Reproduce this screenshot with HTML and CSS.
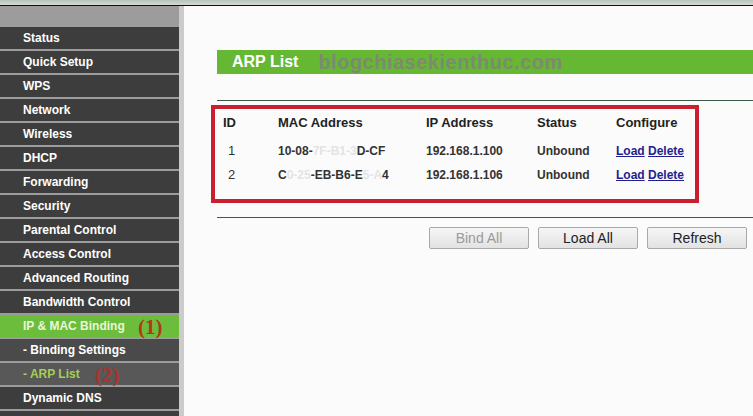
FILE: index.html
```html
<!DOCTYPE html>
<html lang="en">
<head>
    <meta charset="UTF-8">
    <title>ARP List</title>
    <link rel="stylesheet" href="styles.css">
</head>
<body>
    <div class="top-strip"></div>
    <div class="frame">
        <nav class="sidebar">
            <div class="menu-top"></div>
            <a class="menu-item">Status</a>
            <a class="menu-item">Quick Setup</a>
            <a class="menu-item">WPS</a>
            <a class="menu-item">Network</a>
            <a class="menu-item">Wireless</a>
            <a class="menu-item">DHCP</a>
            <a class="menu-item">Forwarding</a>
            <a class="menu-item">Security</a>
            <a class="menu-item">Parental Control</a>
            <a class="menu-item">Access Control</a>
            <a class="menu-item">Advanced Routing</a>
            <a class="menu-item">Bandwidth Control</a>
            <a class="menu-item active">IP &amp; MAC Binding <span class="mark mark-1">(1)</span></a>
            <a class="menu-item sub">- Binding Settings</a>
            <a class="menu-item sub current">- ARP List <span class="mark mark-2">(2)</span></a>
            <a class="menu-item">Dynamic DNS</a>
            <a class="menu-item"></a>
        </nav>

        <main class="content">
            <div class="title-bar">
                <h2>ARP List</h2>
                <span class="watermark">blogchiasekienthuc.com</span>
            </div>
            <div class="rule"></div>

            <div class="arp-box">
                <table class="arp-table">
                    <thead>
                        <tr>
                            <th class="c-id">ID</th>
                            <th class="c-mac">MAC Address</th>
                            <th class="c-ip">IP Address</th>
                            <th class="c-status">Status</th>
                            <th>Configure</th>
                        </tr>
                    </thead>
                    <tbody>
                        <tr>
                            <td class="c-id">1</td>
                            <td>10-08-<span class="masked">7F-B1-3</span>D-CF</td>
                            <td>192.168.1.100</td>
                            <td>Unbound</td>
                            <td><a href="#">Load</a> <a href="#">Delete</a></td>
                        </tr>
                        <tr>
                            <td class="c-id">2</td>
                            <td>C<span class="masked">0-25</span>-EB-B6-E<span class="masked">5-A</span>4</td>
                            <td>192.168.1.106</td>
                            <td>Unbound</td>
                            <td><a href="#">Load</a> <a href="#">Delete</a></td>
                        </tr>
                    </tbody>
                </table>
            </div>

            <div class="rule rule-bottom"></div>

            <div class="actions">
                <button disabled>Bind All</button>
                <button>Load All</button>
                <button>Refresh</button>
            </div>
        </main>
    </div>
</body>
</html>
```

FILE: styles.css
```css
html, body {
    margin: 0;
    height: 100%;
    overflow: hidden;
}
body {
    font-family: "Liberation Sans", Arial, sans-serif;
    background-color: #fbfbfb;
    color: #222;
}
.top-strip {
    height: 5px;
    background: linear-gradient(#b9c4b8, #d4dad2);
    border-bottom: 1px solid #111;
}
.frame {
    display: flex;
    height: 410px;
}
.sidebar {
    width: 179px;
    flex-shrink: 0;
    background-color: #9c9c9c;
    border-right: 5px solid #cbcbcb;
    box-shadow: 1px 0 0 #9a9a9a;
    display: flex;
    flex-direction: column;
}
.menu-top {
    height: 21px;
    flex-shrink: 0;
}
.menu-item {
    display: flex;
    align-items: center;
    height: 22px;
    flex-shrink: 0;
    padding-left: 23px;
    background-color: #3d3d3d;
    border-bottom: 2px solid #9c9c9c;
    color: #fff;
    font-size: 12px;
    font-weight: bold;
    position: relative;
}
.menu-item.active {
    background-color: #6cbd3b;
    color: #eaf6d8;
}
.menu-item.sub {
    background-color: #4a4a4a;
}
.menu-item.current {
    background-color: #585858;
    color: #a4cf55;
}
.mark {
    font-family: "Liberation Serif", "Times New Roman", serif;
    font-size: 21px;
    font-weight: bold;
    color: #b0381e;
    position: absolute;
    top: 0;
    line-height: 24px;
}
.mark-1 { left: 138px; }
.mark-2 { left: 95px; color: #a8352c; }

.content {
    flex: 1;
    padding: 44px 0 0 33px;
    background-color: #fbfbfb;
}
.title-bar {
    height: 24px;
    background-color: #66b833;
    display: flex;
    align-items: center;
    padding-left: 15px;
    gap: 20px;
}
.title-bar h2 {
    margin: 0;
    font-size: 16px;
    color: #fff;
}
.watermark {
    font-size: 20px;
    font-weight: bold;
    color: #7c8a72;
    letter-spacing: 0.5px;
}
.rule {
    height: 1px;
    background-color: #3e5a48;
    margin-top: 26px;
}
.rule-bottom {
    margin-top: 14px;
}
.arp-box {
    margin: 4px 0 0 -6px;
    width: 488px;
    height: 98px;
    box-sizing: border-box;
    border: 4px solid #c9202f;
    padding: 2px 0 0 8px;
}
.arp-table {
    border-collapse: collapse;
}
.arp-table th, .arp-table td {
    padding: 0;
    text-align: left;
    line-height: 24px;
    white-space: nowrap;
}
.arp-table th {
    font-size: 13px;
    padding-bottom: 4px;
    color: #222;
}
.arp-table td {
    font-size: 12px;
    font-weight: bold;
    color: #333;
}
.c-id { width: 55px; }
.c-mac { width: 148px; }
.c-ip { width: 111px; }
.c-status { width: 79px; }
.arp-table td.c-id {
    width: 50px;
    padding-left: 5px;
    font-weight: normal;
    font-size: 13px;
}
.masked {
    color: #e4e4e4;
}
.arp-table a {
    color: #1f1f8f;
}
.actions {
    display: flex;
    justify-content: flex-end;
    gap: 9px;
    margin-top: 9px;
    padding-right: 6px;
}
.actions button {
    width: 100px;
    height: 22px;
    font-family: "Liberation Sans", Arial, sans-serif;
    font-size: 14px;
    color: #222;
    background: linear-gradient(#f6f6f6, #e2e2e2);
    border: 1px solid #a9a9a9;
    border-radius: 2px;
    padding: 0;
}
.actions button:disabled {
    color: #9a9a9a;
}
```
